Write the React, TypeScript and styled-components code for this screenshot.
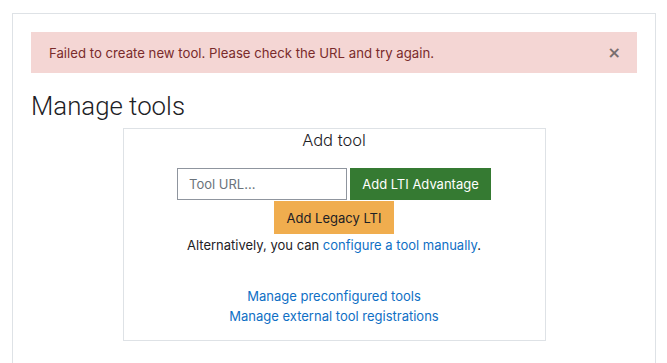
import React from 'react';
import styled, { createGlobalStyle } from 'styled-components';

const GlobalStyle = createGlobalStyle`
  html, body {
    margin: 0;
    padding: 0;
    background: #fff;
  }
  body {
    font-family: Inter, "Noto Sans", sans-serif;
    color: #1d2125;
  }
  * {
    box-sizing: border-box;
  }
`;

const Page = styled.div`
  padding: 13px 11px 0 12px;
  height: 363px;
  overflow: hidden;
`;

const Card = styled.div`
  border: 1px solid #dee2e6;
  border-bottom: none;
  padding: 18px 18px 40px;
  height: 400px;
`;

const Alert = styled.div`
  display: flex;
  align-items: center;
  justify-content: space-between;
  height: 41px;
  padding: 0 18px;
  background: #f4d6d4;
  color: #7a2b2b;
  font-size: 13.2px;
`;

const CloseButton = styled.button`
  border: none;
  background: none;
  padding: 0;
  margin-right: -2px;
  color: #7a6e6e;
  font-family: "DejaVu Sans", sans-serif;
  font-size: 16px;
  font-weight: 700;
  line-height: 1;
  cursor: pointer;
`;

const Heading = styled.h2`
  margin: 18px 0 7px;
  font-family: Roboto, "Noto Sans", sans-serif;
  font-size: 25.8px;
  font-weight: 300;
  line-height: 30px;
  color: #1d2125;
`;

const ToolBox = styled.div`
  width: 423px;
  height: 213px;
  margin: 0 auto;
  border: 1px solid #dee2e6;
  display: flex;
  flex-direction: column;
  align-items: center;
  padding-top: 1px;
`;

const BoxTitle = styled.div`
  font-size: 16.5px;
  font-weight: 300;
  line-height: 20px;
  color: #1d2125;
`;

const UrlRow = styled.div`
  display: flex;
  gap: 3px;
  margin-top: 18px;
`;

const UrlInput = styled.input`
  width: 170px;
  height: 32px;
  border: 1px solid #8f959e;
  border-radius: 0;
  padding: 0 11px;
  font-family: inherit;
  font-size: 13px;
  color: #1d2125;
  outline: none;

  &::placeholder {
    color: #6a737b;
  }
`;

interface ButtonProps {
  $variant: 'success' | 'warning';
}

const Button = styled.button<ButtonProps>`
  height: 32px;
  border: none;
  border-radius: 0;
  padding: 0 12px;
  font-family: inherit;
  font-size: 13px;
  background: ${props => props.$variant === 'success' ? '#357a32' : '#f0ad4e'};
  color: ${props => props.$variant === 'success' ? '#fff' : '#1d2125'};
  cursor: pointer;
`;

const LegacyButton = styled(Button)`
  width: 120px;
  height: 33px;
  margin-top: 1px;
`;

const AdvantageButton = styled(Button)`
  width: 141px;
`;

const Hint = styled.p`
  margin: 1px 0 0;
  font-size: 13px;
  line-height: 20px;
`;

const Link = styled.a`
  color: #0f6fc5;
  text-decoration: none;
`;

const Links = styled.div`
  margin-top: 31px;
  display: flex;
  flex-direction: column;
  align-items: center;
  font-size: 13px;
  line-height: 20px;
`;

const App: React.FC = () => {
  return (
    <>
      <GlobalStyle />
      <Page>
        <Card>
          <Alert>
            <span>Failed to create new tool. Please check the URL and try again.</span>
            <CloseButton aria-label='Close'>×</CloseButton>
          </Alert>
          <Heading>Manage tools</Heading>
          <ToolBox>
            <BoxTitle>Add tool</BoxTitle>
            <UrlRow>
              <UrlInput placeholder='Tool URL...' />
              <AdvantageButton $variant='success'>Add LTI Advantage</AdvantageButton>
            </UrlRow>
            <LegacyButton $variant='warning'>Add Legacy LTI</LegacyButton>
            <Hint>
              Alternatively, you can <Link href='#'>configure a tool manually</Link>.
            </Hint>
            <Links>
              <Link href='#'>Manage preconfigured tools</Link>
              <Link href='#'>Manage external tool registrations</Link>
            </Links>
          </ToolBox>
        </Card>
      </Page>
    </>
  );
};

export default App;
